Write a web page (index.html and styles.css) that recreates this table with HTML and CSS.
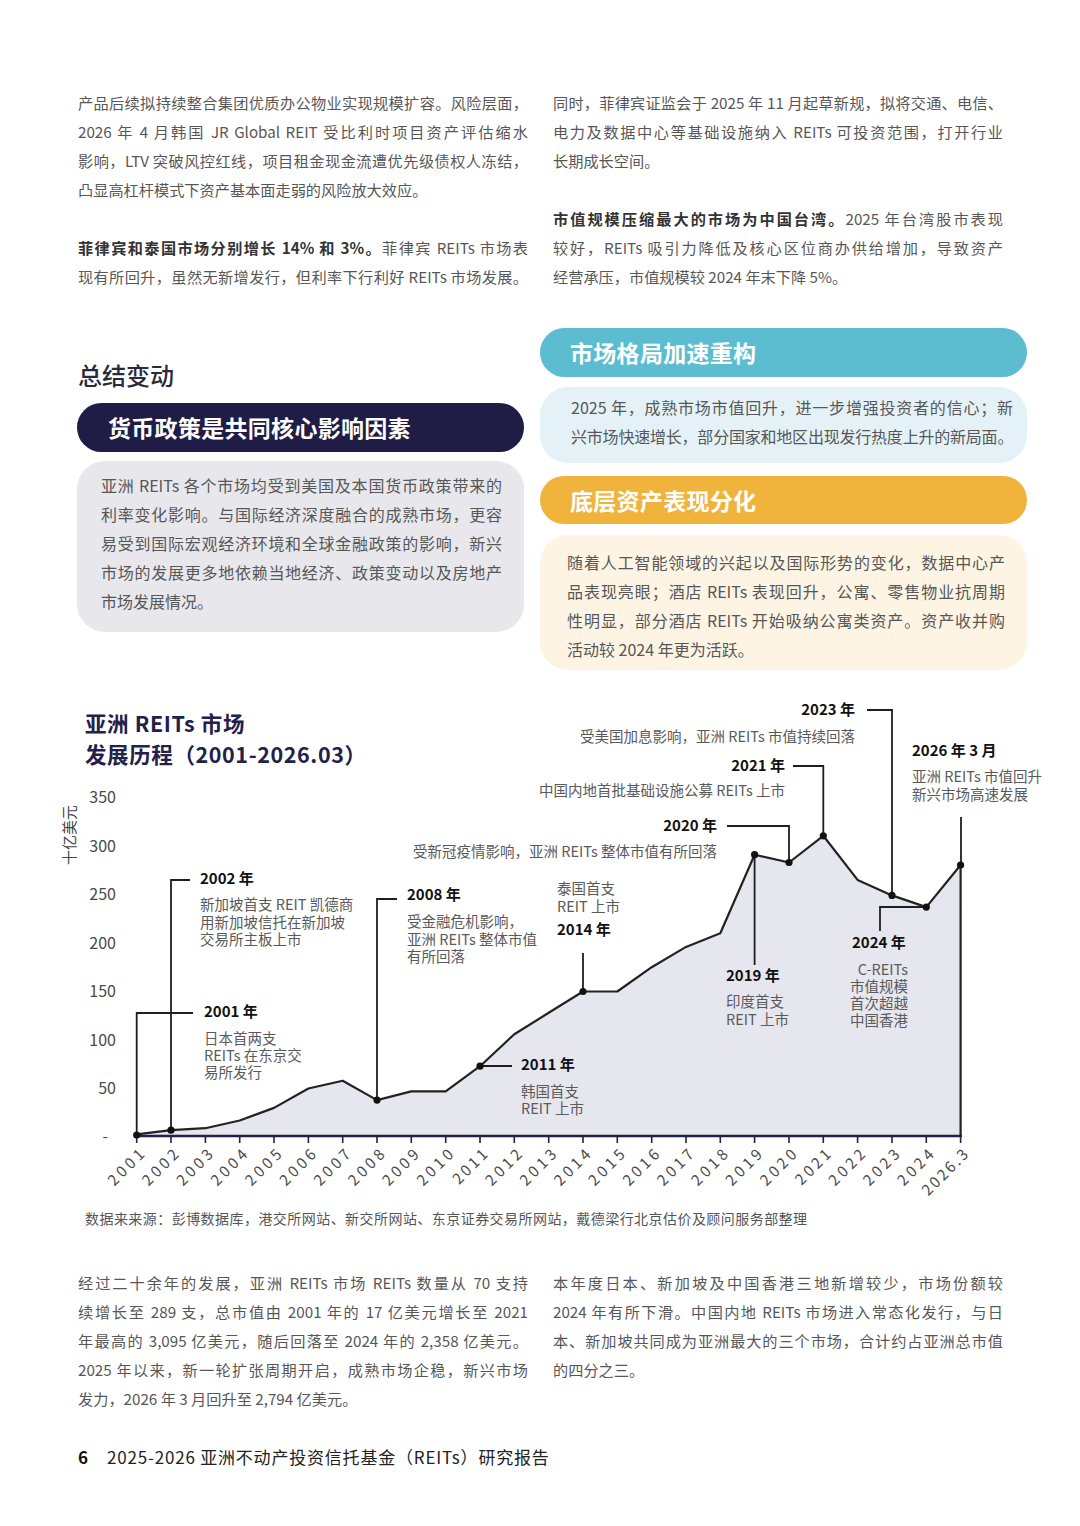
FILE: index.html
```html
<!DOCTYPE html>
<html lang="zh-CN">
<head>
<meta charset="utf-8">
<title>亚洲 REITs 研究报告</title>
<link rel="stylesheet" href="styles.css">
</head>
<body>
<main class="page">
  <section class="cols top">
    <div class="col">
      <p class="para">
        <span class="ln">产品后续拟持续整合集团优质办公物业实现规模扩容。风险层面，</span>
        <span class="ln">2026 年 4 月韩国 JR Global REIT 受比利时项目资产评估缩水</span>
        <span class="ln">影响，LTV 突破风控红线，项目租金现金流遭优先级债权人冻结，</span>
        <span class="ln end">凸显高杠杆模式下资产基本面走弱的风险放大效应。</span>
      </p>
      <p class="para">
        <span class="ln"><b class="lead">菲律宾和泰国市场分别增长 14% 和 3%。</b>菲律宾 REITs 市场表</span>
        <span class="ln">现有所回升，虽然无新增发行，但利率下行利好 REITs 市场发展。</span>
      </p>
    </div>
    <div class="col">
      <p class="para">
        <span class="ln">同时，菲律宾证监会于 2025 年 11 月起草新规，拟将交通、电信、</span>
        <span class="ln">电力及数据中心等基础设施纳入 REITs 可投资范围，打开行业</span>
        <span class="ln end">长期成长空间。</span>
      </p>
      <p class="para">
        <span class="ln"><b class="lead">市值规模压缩最大的市场为中国台湾。</b>2025 年台湾股市表现</span>
        <span class="ln">较好，REITs 吸引力降低及核心区位商办供给增加，导致资产</span>
        <span class="ln end">经营承压，市值规模较 2024 年末下降 5%。</span>
      </p>
    </div>
  </section>

  <section class="summary">
    <div class="sum-left">
      <h2 class="sum-title">总结变动</h2>
      <div class="pill navy">货币政策是共同核心影响因素</div>
      <div class="box grey">
        <span class="ln">亚洲 REITs 各个市场均受到美国及本国货币政策带来的</span>
        <span class="ln">利率变化影响。与国际经济深度融合的成熟市场，更容</span>
        <span class="ln">易受到国际宏观经济环境和全球金融政策的影响，新兴</span>
        <span class="ln">市场的发展更多地依赖当地经济、政策变动以及房地产</span>
        <span class="ln end">市场发展情况。</span>
      </div>
    </div>
    <div class="sum-right">
      <div class="pill teal">市场格局加速重构</div>
      <div class="box blue">
        <span class="ln">2025 年，成熟市场市值回升，进一步增强投资者的信心；新</span>
        <span class="ln tight">兴市场快速增长，部分国家和地区出现发行热度上升的新局面。</span>
      </div>
      <div class="pill yellow">底层资产表现分化</div>
      <div class="box cream">
        <span class="ln">随着人工智能领域的兴起以及国际形势的变化，数据中心产</span>
        <span class="ln">品表现亮眼；酒店 REITs 表现回升，公寓、零售物业抗周期</span>
        <span class="ln">性明显，部分酒店 REITs 开始吸纳公寓类资产。资产收并购</span>
        <span class="ln end">活动较 2024 年更为活跃。</span>
      </div>
    </div>
  </section>

  <section class="chart">
    <svg class="chart-svg" width="1080" height="518" viewBox="0 690 1080 518" xmlns="http://www.w3.org/2000/svg">
      <text class="ctitle" x="85" y="732">亚洲 REITs 市场</text>
      <text class="ctitle" x="85" y="763">发展历程（2001-2026.03）</text>

      <text class="ytitle" x="68" y="835" transform="rotate(-90 68 835)">十亿美元</text>
      <text class="yl" x="116" y="803">350</text>
      <text class="yl" x="116" y="852">300</text>
      <text class="yl" x="116" y="900">250</text>
      <text class="yl" x="116" y="949">200</text>
      <text class="yl" x="116" y="997">150</text>
      <text class="yl" x="116" y="1046">100</text>
      <text class="yl" x="116" y="1094">50</text>
      <text class="yl" x="108" y="1142">-</text>

      <polygon class="area" points="136.7,1134.4 171,1130.2 205.4,1128.2 239.7,1120.5 274,1107.9 308.4,1088.5 342.7,1080.7 377,1100.1 411.3,1091.4 445.7,1091.4 480,1066.2 514.3,1034.2 548.7,1012.8 583,991.5 617.3,991.5 651.7,967.2 686,946.9 720.3,933.3 754.6,854.7 789,862.5 823.3,835.8 857.6,879.9 892,895.4 926.3,907.1 960.6,865 960.6,1136 136.7,1136"/>
      <polyline class="line" points="136.7,1134.4 171,1130.2 205.4,1128.2 239.7,1120.5 274,1107.9 308.4,1088.5 342.7,1080.7 377,1100.1 411.3,1091.4 445.7,1091.4 480,1066.2 514.3,1034.2 548.7,1012.8 583,991.5 617.3,991.5 651.7,967.2 686,946.9 720.3,933.3 754.6,854.7 789,862.5 823.3,835.8 857.6,879.9 892,895.4 926.3,907.1 960.6,865 960.6,1136"/>

      <path class="conn" d="M193,1013H136.7V1134 M190,880H171V1130 M397,899H377V1100 M480,1066H512 M583,953V991 M754.6,855V965 M727,826H789V862 M793,766H823.3V836 M867,710H892V895 M926.3,907H880V931 M961,817V865"/>

      <line class="axis" x1="135.5" y1="1136" x2="962" y2="1136"/>
      <path class="tick" d="M136.7,1136v7M171,1136v7M205.4,1136v7M239.7,1136v7M274,1136v7M308.4,1136v7M342.7,1136v7M377,1136v7M411.3,1136v7M445.7,1136v7M480,1136v7M514.3,1136v7M548.7,1136v7M583,1136v7M617.3,1136v7M651.7,1136v7M686,1136v7M720.3,1136v7M754.6,1136v7M789,1136v7M823.3,1136v7M857.6,1136v7M892,1136v7M926.3,1136v7M960.6,1136v7"/>

      <g class="dots">
        <circle cx="136.7" cy="1135" r="3.6"/>
        <circle cx="171" cy="1130.2" r="3.6"/>
        <circle cx="377" cy="1100.1" r="3.6"/>
        <circle cx="480" cy="1066.2" r="3.6"/>
        <circle cx="583" cy="991.5" r="3.6"/>
        <circle cx="754.6" cy="854.7" r="3.6"/>
        <circle cx="789" cy="862.5" r="3.6"/>
        <circle cx="823.3" cy="835.8" r="3.6"/>
        <circle cx="892" cy="895.4" r="3.6"/>
        <circle cx="926.3" cy="907.1" r="3.6"/>
        <circle cx="960.6" cy="865" r="3.6"/>
      </g>

      <g class="xls">
        <text class="xl" textLength="44" transform="rotate(-45 140.7 1151)" x="140.7" y="1151">2001</text>
        <text class="xl" textLength="44" transform="rotate(-45 175 1151)" x="175" y="1151">2002</text>
        <text class="xl" textLength="44" transform="rotate(-45 209.4 1151)" x="209.4" y="1151">2003</text>
        <text class="xl" textLength="44" transform="rotate(-45 243.7 1151)" x="243.7" y="1151">2004</text>
        <text class="xl" textLength="44" transform="rotate(-45 278 1151)" x="278" y="1151">2005</text>
        <text class="xl" textLength="44" transform="rotate(-45 312.4 1151)" x="312.4" y="1151">2006</text>
        <text class="xl" textLength="44" transform="rotate(-45 346.7 1151)" x="346.7" y="1151">2007</text>
        <text class="xl" textLength="44" transform="rotate(-45 381 1151)" x="381" y="1151">2008</text>
        <text class="xl" textLength="44" transform="rotate(-45 415.3 1151)" x="415.3" y="1151">2009</text>
        <text class="xl" textLength="44" transform="rotate(-45 449.7 1151)" x="449.7" y="1151">2010</text>
        <text class="xl" textLength="42" transform="rotate(-45 484 1151)" x="484" y="1151">2011</text>
        <text class="xl" textLength="44" transform="rotate(-45 518.3 1151)" x="518.3" y="1151">2012</text>
        <text class="xl" textLength="44" transform="rotate(-45 552.7 1151)" x="552.7" y="1151">2013</text>
        <text class="xl" textLength="44" transform="rotate(-45 587 1151)" x="587" y="1151">2014</text>
        <text class="xl" textLength="44" transform="rotate(-45 621.3 1151)" x="621.3" y="1151">2015</text>
        <text class="xl" textLength="44" transform="rotate(-45 655.7 1151)" x="655.7" y="1151">2016</text>
        <text class="xl" textLength="44" transform="rotate(-45 690 1151)" x="690" y="1151">2017</text>
        <text class="xl" textLength="44" transform="rotate(-45 724.3 1151)" x="724.3" y="1151">2018</text>
        <text class="xl" textLength="44" transform="rotate(-45 758.6 1151)" x="758.6" y="1151">2019</text>
        <text class="xl" textLength="44" transform="rotate(-45 793 1151)" x="793" y="1151">2020</text>
        <text class="xl" textLength="43" transform="rotate(-45 827.3 1151)" x="827.3" y="1151">2021</text>
        <text class="xl" textLength="44" transform="rotate(-45 861.6 1151)" x="861.6" y="1151">2022</text>
        <text class="xl" textLength="44" transform="rotate(-45 896 1151)" x="896" y="1151">2023</text>
        <text class="xl" textLength="44" transform="rotate(-45 930.3 1151)" x="930.3" y="1151">2024</text>
        <text class="xl" textLength="58" transform="rotate(-45 964.6 1151)" x="964.6" y="1151">2026.3</text>
      </g>

      <!-- annotations -->
      <text class="ab" x="204" y="1017">2001 年</text>
      <text class="ad" x="204" y="1044">日本首两支</text>
      <text class="ad" x="204" y="1061">REITs 在东京交</text>
      <text class="ad" x="204" y="1078">易所发行</text>

      <text class="ab" x="200" y="884">2002 年</text>
      <text class="ad" x="200" y="910">新加坡首支 REIT 凯德商</text>
      <text class="ad" x="200" y="928">用新加坡信托在新加坡</text>
      <text class="ad" x="200" y="945">交易所主板上市</text>

      <text class="ab" x="407" y="900">2008 年</text>
      <text class="ad" x="407" y="927">受金融危机影响，</text>
      <text class="ad" x="407" y="945">亚洲 REITs 整体市值</text>
      <text class="ad" x="407" y="962">有所回落</text>

      <text class="ab" x="521" y="1070">2011 年</text>
      <text class="ad" x="521" y="1097">韩国首支</text>
      <text class="ad" x="521" y="1114">REIT 上市</text>

      <text class="ad" x="557" y="894">泰国首支</text>
      <text class="ad" x="557" y="912">REIT 上市</text>
      <text class="ab" x="557" y="935">2014 年</text>

      <text class="ab" x="726" y="981">2019 年</text>
      <text class="ad" x="726" y="1007">印度首支</text>
      <text class="ad" x="726" y="1025">REIT 上市</text>

      <text class="ab" x="852" y="948">2024 年</text>
      <text class="ad end" x="908" y="975">C-REITs</text>
      <text class="ad end" x="908" y="992">市值规模</text>
      <text class="ad end" x="908" y="1009">首次超越</text>
      <text class="ad end" x="908" y="1026">中国香港</text>

      <text class="ab end" x="717" y="831">2020 年</text>
      <text class="ad end" x="717" y="857">受新冠疫情影响，亚洲 REITs 整体市值有所回落</text>

      <text class="ab end" x="785" y="771">2021 年</text>
      <text class="ad end" x="785" y="796">中国内地首批基础设施公募 REITs 上市</text>

      <text class="ab end" x="855" y="715">2023 年</text>
      <text class="ad end" x="855" y="742">受美国加息影响，亚洲 REITs 市值持续回落</text>

      <text class="ab" x="912" y="756">2026 年 3 月</text>
      <text class="ad" x="912" y="782">亚洲 REITs 市值回升</text>
      <text class="ad" x="912" y="800">新兴市场高速发展</text>
    </svg>
  </section>

  <p class="source">数据来来源：彭博数据库，港交所网站、新交所网站、东京证券交易所网站，戴德梁行北京估价及顾问服务部整理</p>

  <section class="cols bottom">
    <div class="col">
      <p class="para">
        <span class="ln">经过二十余年的发展，亚洲 REITs 市场 REITs 数量从 70 支持</span>
        <span class="ln">续增长至 289 支，总市值由 2001 年的 17 亿美元增长至 2021</span>
        <span class="ln">年最高的 3,095 亿美元，随后回落至 2024 年的 2,358 亿美元。</span>
        <span class="ln">2025 年以来，新一轮扩张周期开启，成熟市场企稳，新兴市场</span>
        <span class="ln end">发力，2026 年 3 月回升至 2,794 亿美元。</span>
      </p>
    </div>
    <div class="col">
      <p class="para">
        <span class="ln">本年度日本、新加坡及中国香港三地新增较少，市场份额较</span>
        <span class="ln">2024 年有所下滑。中国内地 REITs 市场进入常态化发行，与日</span>
        <span class="ln">本、新加坡共同成为亚洲最大的三个市场，合计约占亚洲总市值</span>
        <span class="ln end">的四分之三。</span>
      </p>
    </div>
  </section>

  <footer class="footer">
    <span class="pageno">6</span>
    <span class="doc">2025-2026 亚洲不动产投资信托基金（REITs）研究报告</span>
  </footer>
</main>
</body>
</html>
```

FILE: styles.css
```css
* {
  box-sizing: border-box;
  margin: 0;
  padding: 0;
}

html,
body {
  background: #ffffff;
}

body {
  width: 1080px;
  height: 1526px;
  overflow: hidden;
  font-family: "Noto Sans CJK SC", "Noto Sans", sans-serif;
  color: #575757;
}

.page {
  padding: 88px 0 0 78px;
}

.cols {
  display: grid;
  grid-template-columns: 450px 450px;
  column-gap: 25px;
}

.para {
  font-size: 15.2px;
  line-height: 29px;
}

.para + .para {
  margin-top: 29px;
}

.ln {
  display: block;
  text-align: justify;
  text-align-last: justify;
}

.ln.end {
  text-align-last: left;
}

.ln.tight {
  letter-spacing: -0.4px;
}

.lead {
  color: #333333;
  font-weight: 700;
}

/* summary */
.summary {
  margin: 37px 0 0 -1px;
  display: grid;
  grid-template-columns: 447px 487px;
  column-gap: 16px;
  align-items: start;
}

.sum-left {
  padding-top: 30px;
}

.sum-title {
  font-size: 24px;
  line-height: 34px;
  font-weight: 500;
  color: #2b2a3a;
  padding-left: 1px;
}

.pill {
  height: 49px;
  border-radius: 25px;
  color: #ffffff;
  font-size: 23px;
  font-weight: 700;
  line-height: 49px;
  padding-left: 31px;
  letter-spacing: 0.3px;
}

.pill.navy {
  background: #1f1c45;
  margin-top: 11px;
}

.pill.teal {
  background: #5cbdd0;
  padding-left: 30px;
}

.pill.yellow {
  background: #f0b43c;
  height: 48px;
  line-height: 48px;
  padding-left: 30px;
  margin-top: 13px;
}

.box {
  border-radius: 28px;
  font-size: 16px;
  line-height: 29px;
  color: #575757;
}

.box.grey {
  background: #e7e7ec;
  margin-top: 9px;
  padding: 10px 22px 16px 24px;
}

.box.blue {
  background: #e4f2f8;
  margin-top: 10px;
  padding: 6px 14px 12px 31px;
}

.box.cream {
  background: #fdf4e4;
  margin-top: 11px;
  padding: 13px 22px 6px 27px;
}

/* chart */
.chart {
  margin: 20px 0 0 -78px;
  width: 1080px;
  height: 518px;
}

.chart-svg {
  display: block;
}

.chart-svg text {
  font-family: "Noto Sans CJK SC", "Noto Sans", sans-serif;
}

.ctitle {
  font-size: 21.5px;
  font-weight: 700;
  fill: #23204a;
  letter-spacing: 0.6px;
}

.ytitle {
  font-size: 15px;
  fill: #444444;
  text-anchor: middle;
  dominant-baseline: central;
}

.yl {
  font-size: 16px;
  fill: #4a4a4a;
  text-anchor: end;
}

.xl {
  font-size: 15px;
  fill: #4a4a4a;
  text-anchor: end;
  dominant-baseline: central;
}

.area {
  fill: #e6e6ee;
  stroke: none;
}

.line {
  fill: none;
  stroke: #222222;
  stroke-width: 2.2;
  stroke-linejoin: round;
}

.conn {
  fill: none;
  stroke: #1f1f1f;
  stroke-width: 1.8;
}

.axis {
  stroke: #23204a;
  stroke-width: 2.5;
}

.tick {
  stroke: #23204a;
  stroke-width: 1.6;
}

.dots circle {
  fill: #111111;
}

.ab {
  font-size: 15px;
  font-weight: 700;
  fill: #111111;
}

.ad {
  font-size: 14.5px;
  fill: #5a5a5a;
}

.end {
  text-anchor: end;
}

.source {
  margin-left: 7px;
  font-size: 14px;
  line-height: 20px;
  color: #555555;
  letter-spacing: 0.45px;
}

.bottom {
  margin-top: 39.5px;
}

.footer {
  margin-top: 32.5px;
  display: flex;
  align-items: center;
  gap: 19px;
  line-height: 24px;
  font-size: 17px;
  color: #222222;
}

.pageno {
  font-weight: 700;
  color: #111111;
}

.doc {
  letter-spacing: 0.8px;
}
```
